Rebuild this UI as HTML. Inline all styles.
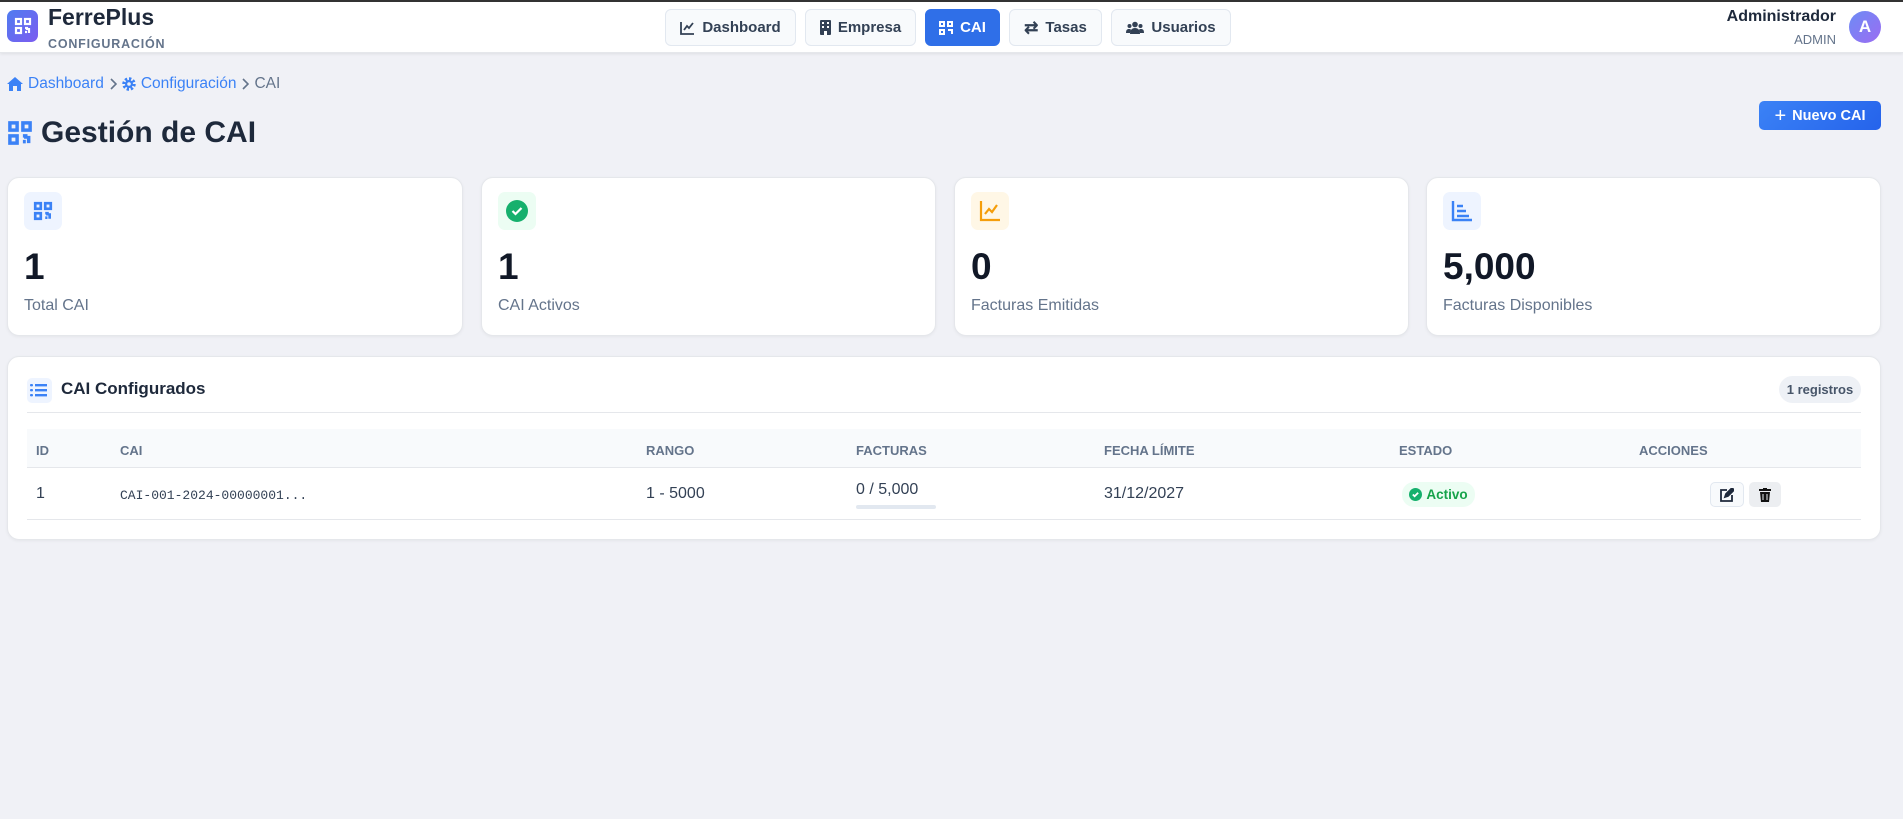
<!DOCTYPE html>
<html><head><meta charset="utf-8"><style>
*{box-sizing:border-box;margin:0;padding:0}
body{width:1903px;height:819px;overflow:hidden;background:#f0f1f6;font-family:"Liberation Sans",sans-serif;color:#1e293b;position:relative}
.abs{position:absolute}
.hdr{position:absolute;left:0;top:0;width:1903px;height:53px;background:#fff;box-shadow:0 1px 3px rgba(0,0,0,.08);border-bottom:1px solid #e5e7eb;border-top:2px solid #333}
.nav{position:absolute;top:9px;height:37px;border:1px solid #e2e8f0;background:#f8fafc;border-radius:6px;display:flex;align-items:center;justify-content:center;gap:7px;font-size:15px;font-weight:bold;color:#334155}
.nav.act{background:#2f6fe8;border-color:#2f6fe8;color:#fff}
.card{position:absolute;background:#fff;border:1px solid #e5e7eb;border-radius:12px;box-shadow:0 1px 3px rgba(0,0,0,.05)}
.ib{position:absolute;left:16px;top:14px;width:38px;height:38px;border-radius:7px;display:flex;align-items:center;justify-content:center}
.num{position:absolute;left:16px;top:68px;font-size:37px;font-weight:bold;color:#111827}
.lbl{position:absolute;left:16px;top:119px;font-size:16px;color:#64748b}
.th{position:absolute;top:443px;font-size:13px;font-weight:bold;color:#64748b}
.td{position:absolute;top:485px;font-size:16px;color:#334155}
</style></head><body>
<div class="hdr"></div>
<div class="abs" style="left:7px;top:10px;width:31px;height:32px;border-radius:7px;background:linear-gradient(135deg,#4f7cf0,#7c5cf0);display:flex;align-items:center;justify-content:center">
<svg width="18" height="18" viewBox="0 0 18 18" fill="none" stroke="#fff" stroke-width="2.2"><rect x="2" y="2" width="5" height="5"/><rect x="11" y="2" width="5" height="5"/><rect x="2" y="11" width="5" height="5"/><path d="M11 11h2v2M15 11v5M11 15h2"/></svg></div>
<div class="abs" style="left:48px;top:4px;font-size:23px;font-weight:bold;color:#1e293b">FerrePlus</div>
<div class="abs" style="left:48px;top:37px;font-size:12.5px;font-weight:bold;color:#64748b;letter-spacing:.8px">CONFIGURACIÓN</div>

<div class="nav" style="left:665px;width:131px"><svg width="15" height="14" viewBox="0 0 15 14" fill="none" stroke="#334155" stroke-width="1.8"><path d="M1 1v12h13M4 9l3-4 2 2 4-5"/></svg>Dashboard</div>
<div class="nav" style="left:805px;width:111px"><svg width="11" height="15" viewBox="0 0 11 15"><rect x="0" y="0" width="11" height="15" rx="1" fill="#334155"/><g fill="#fff"><rect x="2" y="2" width="2" height="2"/><rect x="7" y="2" width="2" height="2"/><rect x="2" y="6" width="2" height="2"/><rect x="7" y="6" width="2" height="2"/><rect x="4" y="11" width="3" height="4"/></g></svg>Empresa</div>
<div class="nav act" style="left:925px;width:75px"><svg width="14" height="14" viewBox="0 0 14 14" fill="none" stroke="#fff" stroke-width="2"><rect x="1" y="1" width="4" height="4"/><rect x="9" y="1" width="4" height="4"/><rect x="1" y="9" width="4" height="4"/><path d="M9 9h4v4"/></svg>CAI</div>
<div class="nav" style="left:1009px;width:93px"><span style="font-size:17px">⇄</span>Tasas</div>
<div class="nav" style="left:1111px;width:120px"><svg width="18" height="14" viewBox="0 0 18 14" fill="#334155"><circle cx="9" cy="3.5" r="2.8"/><circle cx="3.5" cy="5" r="2"/><circle cx="14.5" cy="5" r="2"/><path d="M4 13c0-4 2-6 5-6s5 2 5 6z"/><path d="M0 12c0-3 1-4 3-4s2 1 2 1l-1 3z"/><path d="M18 12c0-3-1-4-3-4s-2 1-2 1l1 3z"/></svg>Usuarios</div>

<div class="abs" style="right:67px;top:8px;font-size:16px;font-weight:bold;color:#1e293b">Administrador</div>
<div class="abs" style="right:67px;top:32px;font-size:13px;color:#64748b">ADMIN</div>
<div class="abs" style="left:1849px;top:11px;width:32px;height:32px;border-radius:50%;background:linear-gradient(135deg,#6d8cf5,#9b6cf2);color:#fff;font-weight:bold;font-size:17px;display:flex;align-items:center;justify-content:center">A</div>

<div class="abs" style="left:7px;top:75px;font-size:15.5px;color:#64748b;display:flex;align-items:center;gap:5px">
<svg width="16" height="14" viewBox="0 0 16 14" fill="#3b82f6"><path d="M8 0L0 7h2v7h4V9h4v5h4V7h2z"/></svg><span style="color:#3b82f6">Dashboard</span><svg width="8" height="12" viewBox="0 0 8 12" fill="none" stroke="#64748b" stroke-width="1.6"><path d="M2 1l5 5-5 5"/></svg>
<svg width="14" height="14" viewBox="0 0 14 14"><circle cx="7" cy="7" r="5" fill="none" stroke="#3b82f6" stroke-width="3.5" stroke-dasharray="2.2 1.7"/><circle cx="7" cy="7" r="4" fill="#3b82f6"/><circle cx="7" cy="7" r="1.8" fill="#f0f1f6"/></svg><span style="color:#3b82f6">Configuración</span><svg width="8" height="12" viewBox="0 0 8 12" fill="none" stroke="#64748b" stroke-width="1.6"><path d="M2 1l5 5-5 5"/></svg><span>CAI</span></div>

<svg class="abs" style="left:7px;top:120px" width="26" height="26" viewBox="0 0 18 18" fill="none" stroke="#3b82f6" stroke-width="2.4"><rect x="2" y="2" width="5" height="5"/><rect x="11" y="2" width="5" height="5"/><rect x="2" y="11" width="5" height="5"/><path d="M11 11h2v2M15 11v5M11 15h2"/></svg>
<div class="abs" style="left:41px;top:116px;font-size:30px;font-weight:bold;color:#1e293b">Gestión de CAI</div>

<div class="abs" style="left:1759px;top:101px;width:122px;height:29px;border-radius:5px;background:linear-gradient(135deg,#3b82f6,#2563eb);color:#fff;font-weight:bold;font-size:14.5px;display:flex;align-items:center;justify-content:center;gap:6px"><span style="font-size:20px;font-weight:normal;line-height:1">+</span>Nuevo CAI</div>

<div class="card" style="left:7px;top:177px;width:456px;height:159px"><div class="ib" style="background:#eef4ff"><svg width="20" height="20" viewBox="0 0 18 18" fill="none" stroke="#3b82f6" stroke-width="2.4"><rect x="2" y="2" width="5" height="5"/><rect x="11" y="2" width="5" height="5"/><rect x="2" y="11" width="5" height="5"/><path d="M11 11h2v2M15 11v5M11 15h2"/></svg></div><div class="num">1</div><div class="lbl">Total CAI</div></div>
<div class="card" style="left:481px;top:177px;width:455px;height:159px"><div class="ib" style="background:#ecfdf3"><svg width="22" height="22" viewBox="0 0 22 22"><circle cx="11" cy="11" r="11" fill="#16b06d"/><path d="M6.5 11l3 3 6-6" stroke="#fff" stroke-width="2.2" fill="none"/></svg></div><div class="num">1</div><div class="lbl">CAI Activos</div></div>
<div class="card" style="left:954px;top:177px;width:455px;height:159px"><div class="ib" style="background:#fff7e6"><svg width="22" height="22" viewBox="0 0 22 22" fill="none" stroke="#f59e0b" stroke-width="2.2"><path d="M2 1v19h19M6 14l4-5 3 3 5-7"/></svg></div><div class="num">0</div><div class="lbl">Facturas Emitidas</div></div>
<div class="card" style="left:1426px;top:177px;width:455px;height:159px"><div class="ib" style="background:#eef4ff"><svg width="22" height="22" viewBox="0 0 22 22" fill="none" stroke="#3b82f6" stroke-width="2.4"><path d="M2 1v19h19M6 6h6M6 11h9M6 16h12"/></svg></div><div class="num">5,000</div><div class="lbl">Facturas Disponibles</div></div>

<div class="card" style="left:7px;top:356px;width:1874px;height:184px"></div>
<div class="abs" style="left:27px;top:378px;width:25px;height:25px;border-radius:5px;background:#eef4ff"></div>
<svg class="abs" style="left:30px;top:383px" width="17" height="15" viewBox="0 0 17 15" fill="#3b82f6"><rect x="0" y="1" width="3" height="2.4" rx="1"/><rect x="0" y="6" width="3" height="2.4" rx="1"/><rect x="0" y="11" width="3" height="2.4" rx="1"/><rect x="5" y="1" width="12" height="2.4"/><rect x="5" y="6" width="12" height="2.4"/><rect x="5" y="11" width="12" height="2.4"/></svg>
<div class="abs" style="left:61px;top:379px;font-size:17px;font-weight:bold;color:#1e293b">CAI Configurados</div>
<div class="abs" style="left:1779px;top:376px;width:82px;height:27px;border-radius:14px;background:#eef1f6;font-size:13px;font-weight:bold;color:#475569;display:flex;align-items:center;justify-content:center">1 registros</div>
<div class="abs" style="left:27px;top:412px;width:1834px;height:1px;background:#e5e7eb"></div>
<div class="abs" style="left:27px;top:429px;width:1834px;height:39px;background:#f8fafc;border-bottom:1px solid #e5e7eb"></div>
<div class="th" style="left:36px">ID</div><div class="th" style="left:120px">CAI</div><div class="th" style="left:646px">RANGO</div><div class="th" style="left:856px">FACTURAS</div><div class="th" style="left:1104px">FECHA LÍMITE</div><div class="th" style="left:1399px">ESTADO</div><div class="th" style="left:1639px">ACCIONES</div>
<div class="td" style="left:36px">1</div>
<div class="td" style="left:120px;top:488px;font-family:'Liberation Mono',monospace;font-size:13px">CAI-001-2024-00000001...</div>
<div class="td" style="left:646px">1 - 5000</div>
<div class="td" style="left:856px;top:481px">0 / 5,000</div>
<div class="abs" style="left:856px;top:505px;width:80px;height:4px;border-radius:2px;background:#e2e8f0"></div>
<div class="td" style="left:1104px">31/12/2027</div>
<div class="abs" style="left:1402px;top:482px;width:73px;height:25px;border-radius:12px;background:#ecfdf3;color:#16a34a;font-size:13.5px;font-weight:bold;display:flex;align-items:center;justify-content:center;gap:4px"><svg width="13" height="13" viewBox="0 0 22 22"><circle cx="11" cy="11" r="11" fill="#16b06d"/><path d="M6.5 11l3 3 6-6" stroke="#fff" stroke-width="3" fill="none"/></svg>Activo</div>
<div class="abs" style="left:1710px;top:482px;width:34px;height:25px;border:1px solid #e2e8f0;border-radius:5px;background:#f8fafc;display:flex;align-items:center;justify-content:center"><svg width="14" height="14" viewBox="0 0 14 14" fill="none" stroke="#1e293b" stroke-width="1.8"><path d="M7 2H1v11h11V7"/><path d="M5 9l1-3 6-6 2 2-6 6z" fill="#1e293b"/></svg></div>
<div class="abs" style="left:1749px;top:482px;width:32px;height:25px;border-radius:5px;background:#eceef1;display:flex;align-items:center;justify-content:center"><svg width="12" height="14" viewBox="0 0 12 14" fill="#111"><rect x="0" y="1" width="12" height="2"/><rect x="4" y="0" width="4" height="2"/><path d="M1 4h10l-1 10H2z"/><g fill="#eceef1"><rect x="3.5" y="6" width="1" height="6"/><rect x="7.5" y="6" width="1" height="6"/></g></svg></div>
<div class="abs" style="left:27px;top:519px;width:1834px;height:1px;background:#e5e7eb"></div>
</body></html>
